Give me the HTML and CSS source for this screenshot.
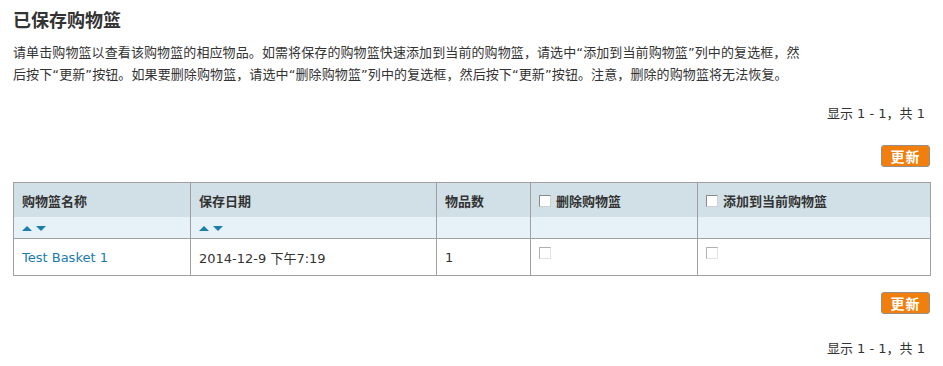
FILE: index.html
```html
<!DOCTYPE html>
<html lang="zh">
<head>
<meta charset="utf-8">
<link rel="stylesheet" href="styles.css">
</head>
<body>
<div class="page">
  <h1 class="title">已保存购物篮</h1>
  <p class="intro">请单击购物篮以查看该购物篮的相应物品。如需将保存的购物篮快速添加到当前的购物篮，请选中“添加到当前购物篮”列中的复选框，然后按下“更新”按钮。如果要删除购物篮，请选中“删除购物篮”列中的复选框，然后按下“更新”按钮。注意，删除的购物篮将无法恢复。</p>
  <div class="paging top">显示 1 - 1，共 1</div>
  <div class="actions"><button class="btn">更新</button></div>
  <table class="grid">
    <colgroup>
      <col class="c1"><col class="c2"><col class="c3"><col class="c4"><col class="c5">
    </colgroup>
    <thead>
      <tr class="head">
        <th>购物篮名称</th>
        <th>保存日期</th>
        <th>物品数</th>
        <th><span class="cb"></span>删除购物篮</th>
        <th><span class="cb"></span>添加到当前购物篮</th>
      </tr>
      <tr class="sort">
        <td><span class="up"></span><span class="down"></span></td>
        <td><span class="up"></span><span class="down"></span></td>
        <td></td><td></td><td></td>
      </tr>
    </thead>
    <tbody>
      <tr class="row">
        <td><a class="link" href="#">Test Basket 1</a></td>
        <td>2014-12-9 下午7:19</td>
        <td>1</td>
        <td class="chk"><span class="cb dim"></span></td>
        <td class="chk"><span class="cb dim"></span></td>
      </tr>
    </tbody>
  </table>
  <div class="actions bottom"><button class="btn">更新</button></div>
  <div class="paging last">显示 1 - 1，共 1</div>
</div>
</body>
</html>
```
FILE: styles.css
```css
html, body {
  margin: 0;
  padding: 0;
  background: #fff;
}
body {
  font-family: "DejaVu Sans", "Noto Sans CJK SC", sans-serif;
  font-size: 13px;
  color: #333;
}
.page {
  padding: 0 13px;
}
.title {
  margin: 0;
  padding-top: 9px;
  font-size: 18px;
  line-height: 24px;
  font-weight: bold;
  color: #333;
}
.intro {
  margin: 9px 0 0 0;
  width: 794px;
  line-height: 22px;
  font-size: 13px;
  letter-spacing: 0.1px;
}
.paging {
  text-align: right;
  padding-right: 5px;
  line-height: 20px;
}
.paging.top {
  margin-top: 18px;
}
.actions {
  display: flex;
  justify-content: flex-end;
  margin-top: 21px;
}
.btn {
  width: 49px;
  height: 22px;
  padding: 0;
  background: #f07f0e;
  border: 1px solid #9a8f86;
  border-radius: 3px;
  color: #fff;
  font-family: "Noto Sans CJK SC", sans-serif;
  font-weight: bold;
  font-size: 14px;
  line-height: 18px;
  letter-spacing: 1px;
}
.grid {
  margin-top: 15px;
  width: 917px;
  border-collapse: collapse;
  table-layout: fixed;
}
.c1 { width: 177px; }
.c2 { width: 246px; }
.c3 { width: 94px; }
.c4 { width: 167px; }
.c5 { width: 233px; }
.grid th, .grid td {
  border: 1px solid #a0a0a0;
  padding: 0 8px;
  text-align: left;
  vertical-align: middle;
}
.head th {
  background: #d1e0e6;
  height: 34px;
  font-weight: bold;
  color: #333;
  border-bottom: none;
}
.sort td {
  background: #e6f2f7;
  height: 21px;
  border-top: none;
}
.row td {
  height: 36px;
}
.row td.chk {
  vertical-align: top;
  padding-top: 8px;
  height: 28px;
}
.link {
  color: #1a7bb0;
  text-decoration: none;
}
.cb {
  display: inline-block;
  box-sizing: border-box;
  width: 12px;
  height: 12px;
  border: 1px solid #8a8a8a;
  border-right-color: #d0d0d0;
  border-bottom-color: #d0d0d0;
  background: #fff;
  vertical-align: -1px;
  margin-right: 5px;
}
.cb.dim {
  border-color: #b0b0b0;
  border-right-color: #e2e2e2;
  border-bottom-color: #e2e2e2;
  vertical-align: top;
}
.up, .down {
  display: inline-block;
  width: 0;
  height: 0;
  border-left: 5px solid transparent;
  border-right: 5px solid transparent;
  vertical-align: middle;
}
.up {
  border-bottom: 5px solid #1b7fae;
  margin-right: 4px;
}
.down {
  border-top: 5px solid #1b7fae;
}
.actions.bottom {
  margin-top: 16px;
}
.paging.last {
  margin-top: 25px;
}
```
